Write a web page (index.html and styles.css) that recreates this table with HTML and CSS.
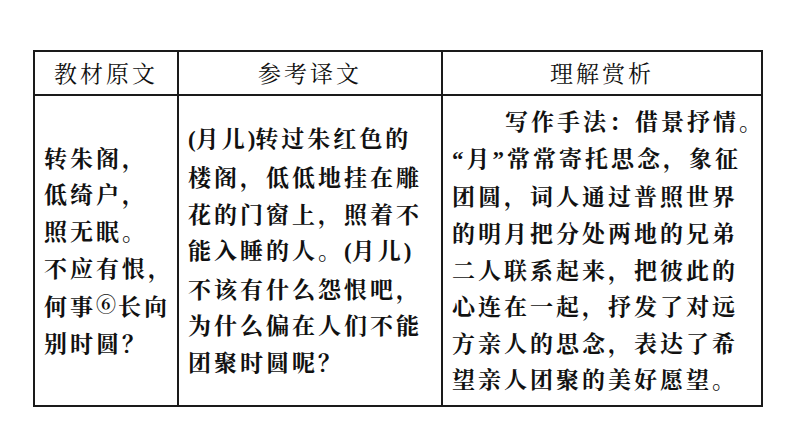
FILE: index.html
```html
<!DOCTYPE html>
<html lang="zh-CN">
<head>
<meta charset="utf-8">
<title>水调歌头</title>
<link rel="stylesheet" href="styles.css">
</head>
<body>
<table class="grid">
  <colgroup>
    <col class="c1">
    <col class="c2">
    <col class="c3">
  </colgroup>
  <thead>
    <tr>
      <th>教材原文</th>
      <th>参考译文</th>
      <th>理解赏析</th>
    </tr>
  </thead>
  <tbody>
    <tr>
      <td>转朱阁，<br>低绮户，<br>照无眠。<br>不应有恨，<br>何事<span class="note">⑥</span>长向<br>别时圆？</td>
      <td><span class="lat">(</span>月儿<span class="lat">)</span>转过朱红色的<br>楼阁，低低地挂在雕<br>花的门窗上，照着不<br>能入睡的人。<span class="lat">(</span>月儿<span class="lat">)</span><br>不该有什么怨恨吧，<br>为什么偏在人们不能<br>团聚时圆呢？</td>
      <td><p class="lead">写作手法：借景抒情。</p><p><span class="q">“</span>月<span class="q">”</span>常常寄托思念，象征<br>团圆，词人通过普照世界<br>的明月把分处两地的兄弟<br>二人联系起来，把彼此的<br>心连在一起，抒发了对远<br>方亲人的思念，表达了希<br>望亲人团聚的美好愿望。</p></td>
    </tr>
  </tbody>
</table>
</body>
</html>
```

FILE: styles.css
```css
html, body {
  margin: 0;
  padding: 0;
  background: #ffffff;
}

body {
  padding: 50px 0 0 33px;
  font-family: "Noto Serif CJK SC", "Noto Sans CJK SC", serif;
  color: #111111;
}

.grid {
  border-collapse: collapse;
  table-layout: fixed;
  width: 728px;
}

.c1 { width: 144px; }
.c2 { width: 264px; }
.c3 { width: 320px; }

.grid th,
.grid td {
  border: 2px solid #1a1a1a;
  font-size: 23px;
  letter-spacing: 3px;
  line-height: 36.6px;
  vertical-align: middle;
}

.grid th {
  height: 42px;
  padding: 0;
  font-weight: 400;
  text-align: center;
}

.grid td {
  height: 309px;
  padding: 0 4px 0 9px;
  font-weight: 700;
  text-align: left;
  white-space: nowrap;
}

.grid p {
  margin: 0;
}

.lead {
  text-indent: 53px;
}

.lat {
  font-family: "Liberation Serif", serif;
  font-weight: bold;
  letter-spacing: 0;
}

.q {
  font-family: "Liberation Serif", serif;
  font-weight: bold;
  letter-spacing: 3px;
}

.note {
  font-size: 20px;
  font-weight: bold;
  letter-spacing: 2px;
  vertical-align: 3px;
}
```
